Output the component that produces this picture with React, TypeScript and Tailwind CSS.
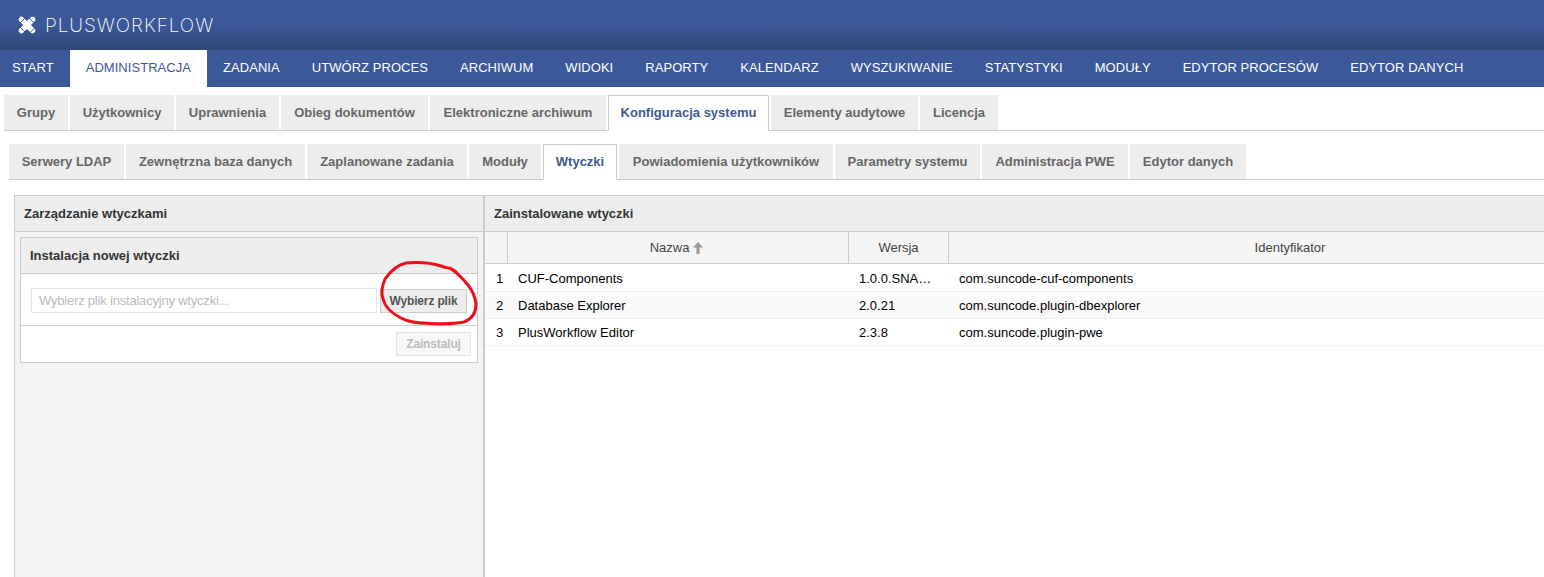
const menu = ["START", "ADMINISTRACJA", "ZADANIA", "UTWÓRZ PROCES", "ARCHIWUM", "WIDOKI", "RAPORTY", "KALENDARZ", "WYSZUKIWANIE", "STATYSTYKI", "MODUŁY", "EDYTOR PROCESÓW", "EDYTOR DANYCH"];
const tabs = [
  { label: "Grupy", w: "w-[64px]" },
  { label: "Użytkownicy", w: "w-[104px]" },
  { label: "Uprawnienia", w: "w-[103px]" },
  { label: "Obieg dokumentów", w: "w-[147px]" },
  { label: "Elektroniczne archiwum", w: "w-[176px]" },
  { label: "Konfiguracja systemu", w: "w-[161px]" },
  { label: "Elementy audytowe", w: "w-[147px]" },
  { label: "Licencja", w: "w-[78px]" },
];
const subTabs = [
  { label: "Serwery LDAP", w: "w-[115px]" },
  { label: "Zewnętrzna baza danych", w: "w-[179px]" },
  { label: "Zaplanowane zadania", w: "w-[160px]" },
  { label: "Moduły", w: "w-[72px]" },
  { label: "Wtyczki", w: "w-[74px]" },
  { label: "Powiadomienia użytkowników", w: "w-[214px]" },
  { label: "Parametry systemu", w: "w-[145px]" },
  { label: "Administracja PWE", w: "w-[146px]" },
  { label: "Edytor danych", w: "w-[116px]" },
];
const plugins = [
  { name: "CUF-Components", version: "1.0.0.SNA…", id: "com.suncode-cuf-components" },
  { name: "Database Explorer", version: "2.0.21", id: "com.suncode.plugin-dbexplorer" },
  { name: "PlusWorkflow Editor", version: "2.3.8", id: "com.suncode.plugin-pwe" },
];

function Logo() {
  return (
    <svg width="18" height="18" viewBox="0 0 18 18" className="shrink-0">
      <path d="M3.500 3.500 14.500 14.500M14.500 3.500 3.500 14.500" stroke="#fff" strokeWidth="5.500" strokeLinecap="round" />
      <path d="M1.500 7.500 7.500 1.500M10.500 1.500 16.500 7.500M1.500 10.500 7.500 16.500M12 16.500 16.500 12" stroke="#3b5998" strokeWidth="1" />
    </svg>
  );
}

function Tabs({ items, active, className }: { items: { label: string; w: string }[]; active: string; className: string }) {
  return (
    <div className={`flex gap-0.5 border-b border-[#ccc] h-[36px] ${className}`}>
      {items.map((t) => (
        <div
          key={t.label}
          className={
            t.label === active
              ? `${t.w} h-[36px] flex items-center justify-center border border-[#ccc] border-b-white bg-white text-[13px] font-bold text-[#3b5998]`
              : `${t.w} h-[35px] flex items-center justify-center bg-[#ededed] text-[13px] font-bold text-[#666]`
          }
        >
          {t.label}
        </div>
      ))}
    </div>
  );
}

export default function App() {
  return (
    <div className="relative h-[577px] overflow-hidden flex flex-col bg-white [font-family:Liberation_Sans,Arial,sans-serif]">
      <div className="h-[50px] shrink-0 flex items-center gap-[9px] pl-[18px] bg-gradient-to-b from-[#3b5998] from-50% to-[#2f4777]">
        <Logo />
        <span className="[font-family:Inter,sans-serif] font-extralight text-[19px] leading-none tracking-[0.95px] text-white">PLUSWORKFLOW</span>
      </div>

      <div className="h-[37px] shrink-0 flex bg-[#3b5998] text-[13px] tracking-[0.05px]">
        {menu.map((m, i) => (
          <div
            key={m}
            className={`flex items-center pb-px ${i === 0 ? "pl-3 pr-4" : "px-4"} ${m === "ADMINISTRACJA" ? "bg-white text-[#3b5998]" : "text-white"}`}
          >
            {m}
          </div>
        ))}
      </div>

      <Tabs items={tabs} active="Konfiguracja systemu" className="mt-2 ml-1" />
      <Tabs items={subTabs} active="Wtyczki" className="mt-[13px] ml-[9px]" />

      <div className="flex flex-1 min-h-0 mt-[15px] ml-3.5 border-t border-[#ccc]">
        {/* lewy panel */}
        <div className="w-[470px] shrink-0 flex flex-col border-x border-[#ccc] bg-[#f3f3f3]">
          <div className="h-[36px] shrink-0 flex items-center pl-[9px] bg-[#ededed] border-b border-[#ccc] text-[13px] font-bold text-[#333]">
            Zarządzanie wtyczkami
          </div>
          <div className="mt-[5px] mx-[5px] border border-[#ccc] bg-white">
            <div className="h-[36px] flex items-center pl-[9px] bg-[#ededed] border-b border-[#ccc] text-[13px] font-bold text-[#333]">
              Instalacja nowej wtyczki
            </div>
            <div className="h-[52px] flex items-start pt-[14px] gap-[3px] pl-2.5 border-b border-[#ccc]">
              <div className="w-[346px] h-[25px] flex items-center pl-[7px] border border-[#e3e3e3] text-[13px] tracking-[-0.2px] text-[#bbb]">
                Wybierz plik instalacyjny wtyczki...
              </div>
              <div className="w-[87px] h-[24px] mt-px flex items-center justify-center bg-[#ededed] border border-[#ccc] text-[12px] tracking-[-0.15px] font-bold text-[#555]">
                Wybierz plik
              </div>
            </div>
            <div className="h-[36px] flex items-center justify-end pr-1.5">
              <div className="w-[75px] h-[24px] flex items-center justify-center bg-[#f7f7f7] border border-[#e3e3e3] text-[12px] tracking-[-0.15px] font-bold text-[#bbb]">
                Zainstaluj
              </div>
            </div>
          </div>
        </div>

        {/* prawy panel */}
        <div className="flex-1 min-w-0 overflow-hidden flex flex-col border-l border-[#ccc]">
          <div className="h-[36px] shrink-0 flex items-center pl-[9px] bg-[#ededed] border-b border-[#ccc] text-[13px] font-bold text-[#333]">
            Zainstalowane wtyczki
          </div>
          <div className="h-[32px] shrink-0 flex bg-[#f5f5f5] border-b border-[#ccc] text-[13px] text-[#444]">
            <div className="w-[23px] shrink-0 border-r border-[#ccc]" />
            <div className="w-[341px] shrink-0 flex items-center justify-center gap-1 pr-[3px] border-r border-[#ccc]">
              Nazwa
              <svg width="10" height="12" viewBox="0 0 10 12">
                <path d="M5 0 10 5.500H6.500V12H3.500V5.500H0z" fill="#999" />
              </svg>
            </div>
            <div className="w-[100px] shrink-0 flex items-center justify-center border-r border-[#ccc]">Wersja</div>
            <div className="w-[682px] shrink-0 flex items-center justify-center">Identyfikator</div>
          </div>
          {plugins.map((p, i) => (
            <div
              key={p.id}
              className={`${i === 0 ? "h-[28px] pt-[2px]" : "h-[27px] pt-px"} shrink-0 flex items-center border-b border-[#eee] text-[13px] text-black ${i === 1 ? "bg-[#fafafa]" : "bg-white"}`}
            >
              <div className="w-[23px] shrink-0 pl-[11px]">{i + 1}</div>
              <div className="w-[341px] shrink-0 pl-[10px]">{p.name}</div>
              <div className="w-[100px] shrink-0 pl-[10px]">{p.version}</div>
              <div className="flex-1 pl-[10px]">{p.id}</div>
            </div>
          ))}
        </div>
      </div>

      {/* odręczne kółko */}
      <svg className="absolute left-0 top-0 pointer-events-none" width="1544" height="577" fill="none">
        <path
          d="M457 273C452 267 448 269 441 266C432 263 418 262 406 263C396 265 390 272 385 279C382 286 381 293 383 299C385 307 391 313 401 318C410 323 420 323 430 323.500C442 324 455 324 464 322C472 319 476 312 476 304C475 296 472 290 468 285C464 280 460 275 450 268"
          stroke="#ec0f1a"
          strokeWidth="3"
          strokeLinecap="round"
        />
      </svg>
    </div>
  );
}
